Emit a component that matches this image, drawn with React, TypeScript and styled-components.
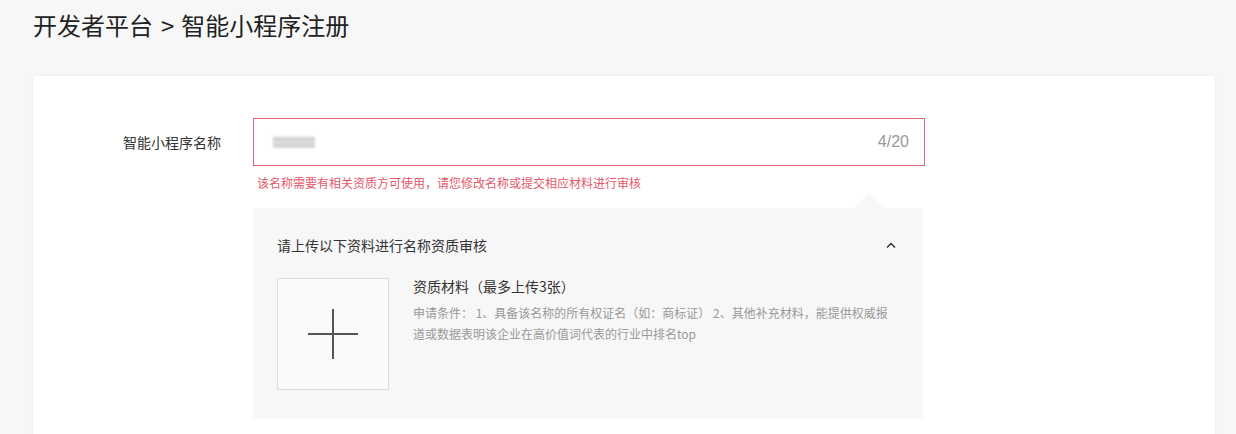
import styled, { createGlobalStyle } from 'styled-components'

const GlobalStyle = createGlobalStyle`
  html, body {
    margin: 0;
    padding: 0;
    background: #f7f7f8;
  }

  body {
    font-family: 'Noto Sans CJK SC', 'Noto Sans', Arial, sans-serif;
    color: #333;
    overflow: hidden;
  }
`

const Page = styled.div`
  padding: 9px 21px 0 33px;
`

const Title = styled.h1`
  margin: 0;
  font-size: 24px;
  font-weight: 400;
  line-height: 32px;
  color: #222;

  .sep {
    margin: 0 7px 0 8px;
  }
`

const Card = styled.div`
  margin-top: 35px;
  min-height: 420px;
  background: #fff;
  border-radius: 2px;
  box-shadow: 0 0 4px rgba(0, 0, 0, 0.05);
  padding-top: 42px;
`

const FormRow = styled.div`
  display: grid;
  grid-template-columns: 188px 672px;
  column-gap: 32px;
  align-items: start;
`

const Label = styled.label`
  font-size: 14px;
  line-height: 48px;
  text-align: right;
  color: #333;
`

const Field = styled.div`
  display: flex;
  flex-direction: column;
`

const InputBox = styled.div<{ $error?: boolean }>`
  box-sizing: border-box;
  height: 48px;
  display: flex;
  align-items: center;
  justify-content: space-between;
  padding: 0 15px 0 19px;
  border: 1px solid ${(p) => (p.$error ? '#e06674' : '#ddd')};
  background: #fff;
`

const BlurredValue = styled.span`
  display: block;
  width: 42px;
  height: 12px;
  background: linear-gradient(#e9e9e9 0 20%, #cfcfcf 20% 45%, #e2e2e2 45% 60%, #d6d6d6 60% 100%);
  filter: blur(0.8px);
`

const Counter = styled.span`
  font-family: 'Liberation Sans', Arial, sans-serif;
  font-size: 16px;
  color: #999;
`

const ErrorText = styled.p`
  margin: 6px 0 0 4px;
  font-size: 12px;
  line-height: 22px;
  color: #e4596a;
`

const Panel = styled.div`
  position: relative;
  width: 670px;
  box-sizing: border-box;
  margin-top: 14px;
  padding: 26px 27px 29px 24px;
  background: #f7f7f7;

  &::before {
    content: '';
    position: absolute;
    top: -15px;
    right: 39px;
    border-left: 15px solid transparent;
    border-right: 15px solid transparent;
    border-bottom: 15px solid #f7f7f7;
  }
`

const PanelHeader = styled.div`
  display: flex;
  align-items: center;
  justify-content: space-between;
  height: 22px;
  font-size: 14px;
  color: #333;
`

const PanelBody = styled.div`
  display: flex;
  gap: 24px;
  margin-top: 22px;
`

const UploadBox = styled.button`
  flex: none;
  width: 112px;
  height: 112px;
  padding: 0;
  display: flex;
  align-items: center;
  justify-content: center;
  background: #fafafa;
  border: 1px solid #ddd;
  cursor: pointer;
`

const Info = styled.div`
  flex: 1;
`

const InfoTitle = styled.div`
  font-size: 14px;
  line-height: 16px;
  color: #333;
`

const InfoDesc = styled.p`
  margin: 8px 0 0;
  font-size: 12px;
  line-height: 21px;
  color: #999;
`

function ChevronUp() {
  return (
    <svg width="10" height="7" viewBox="0 0 10 7" fill="none">
      <path d="M1 5.5L5 1.5L9 5.5" stroke="#333" strokeWidth="1.5" />
    </svg>
  )
}

function PlusIcon() {
  return (
    <svg width="52" height="52" viewBox="0 0 52 52">
      <path d="M1 26H51M26 1V51" stroke="#555" strokeWidth="2" />
    </svg>
  )
}

export default function App() {
  return (
    <>
      <GlobalStyle />
      <Page>
        <Title>
          开发者平台<span className="sep">&gt;</span>智能小程序注册
        </Title>
        <Card>
          <FormRow>
            <Label>智能小程序名称</Label>
            <Field>
              <InputBox $error>
                <BlurredValue />
                <Counter>4/20</Counter>
              </InputBox>
              <ErrorText>该名称需要有相关资质方可使用，请您修改名称或提交相应材料进行审核</ErrorText>
              <Panel>
                <PanelHeader>
                  <span>请上传以下资料进行名称资质审核</span>
                  <ChevronUp />
                </PanelHeader>
                <PanelBody>
                  <UploadBox type="button">
                    <PlusIcon />
                  </UploadBox>
                  <Info>
                    <InfoTitle>资质材料（最多上传3张）</InfoTitle>
                    <InfoDesc>
                      申请条件： 1、具备该名称的所有权证名（如：商标证） 2、其他补充材料，能提供权威报道或数据表明该企业在高价值词代表的行业中排名top
                    </InfoDesc>
                  </Info>
                </PanelBody>
              </Panel>
            </Field>
          </FormRow>
        </Card>
      </Page>
    </>
  )
}
